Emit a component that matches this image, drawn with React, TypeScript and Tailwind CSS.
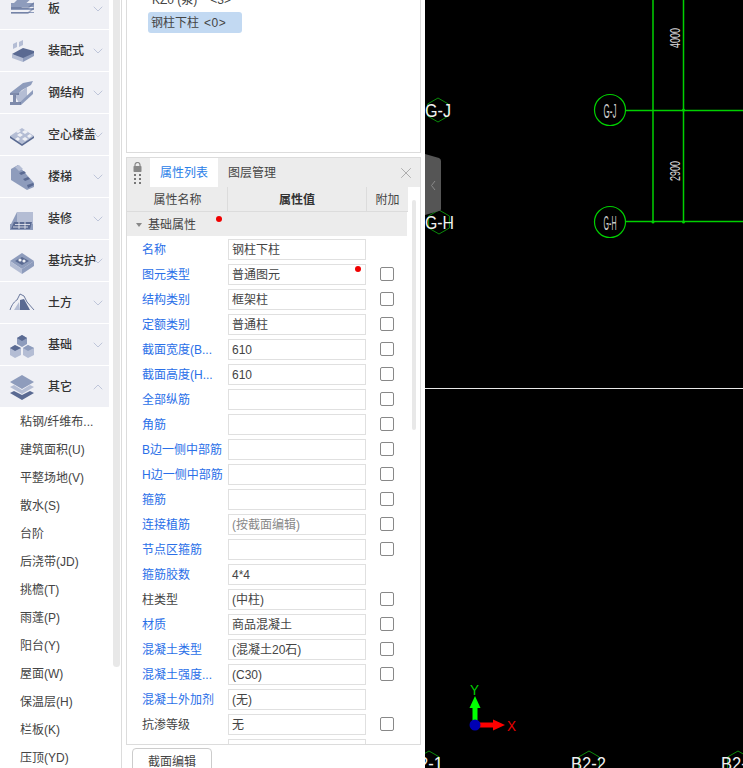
import { ChevronDown, ChevronUp, X } from 'lucide-react';
import type { ReactNode } from 'react';

const dark = '#5a6a92';
const mid = '#8e9cbc';
const light = '#b4bdd4';

const icons: Record<string, ReactNode> = {
  slab: (
    <>
      <path d="M11 12 L24 -1 H34 V2 L20 15 H11Z" fill={mid} />
      <path d="M11 9h23v4H11zM11 14h23v4H11zM11 19h23v-3H11z" fill={mid} />
      <path d="M11 13h17l6-5v2l-6 5H11zM11 18h17l6-5v2l-6 5H11z" fill={dark} opacity="0.5" />
    </>
  ),
  prefab: (
    <>
      <path d="M13 8l4-2v5l-4 2zM19 6l4-2v5l-4 2z" fill={light} />
      <path d="M12 18l11-6 11 3v3l-11 6z" fill={dark} />
      <path d="M12 18v4l11 4v-4z" fill={light} />
      <path d="M23 22v4l11-6v-3z" fill={mid} />
    </>
  ),
  steel: (
    <>
      <path d="M15 18L27 9V18L19 25Z" fill={light} />
      <path d="M10 15L23 5L33 3L31 7L22 12L19 15Z" fill={mid} />
      <path d="M21 27L33 16V12L20 24Z" fill={mid} />
      <path d="M10 15h9v2h-3v7h5v3H10v-3h3v-7h-3z" fill={dark} opacity="0.75" />
    </>
  ),
  hollow: (
    <>
      <path d="M10 16 L22 8 L34 16 L22 24Z" fill={light} />
      <path d="M10 16v2l12 8 12-8v-2l-12 8z" fill={dark} />
      <path d="M17 15l3-2 3 2-3 2zM22 12l3-2 3 2-3 2zM22 19l3-2 3 2-3 2zM27 16l3-2 2 2-3 2zM15 19l3-2 2 2-2 2zM16 12l3-2 2 1-3 2z" fill="#eff0f5" />
    </>
  ),
  stairs: (
    <>
      <path d="M11 7L18 3L34 21V25L27 28L11 18Z" fill={mid} />
      <path d="M15 5l4-2 4 4-4 2z" fill={light} />
      <path d="M19 11l5-2 2 2-5 2zM23 17l5-2 2 2-5 2zM27 23l6-2 1 2-6 3z" fill={dark} />
    </>
  ),
  finish: (
    <>
      <path d="M17 8h16v14H17z" fill={light} />
      <path d="M10 22l7-14v14z" fill={mid} />
      <path d="M10 20h23v6H10z" fill={mid} />
      <path d="M14 18h18l-2 7H11z" fill={dark} />
      <path d="M15 20.500h15M13 23h15M19 18v7M25 18v7" stroke="#eff0f5" strokeWidth="0.8" />
    </>
  ),
  pit: (
    <>
      <path d="M10 15l12-8 12 8-12 8z" fill={mid} />
      <path d="M10 15v5l12 8v-5z" fill={light} />
      <path d="M22 23v5l12-8v-5z" fill={mid} />
      <path d="M15 15l7-4 7 4-7 4z" fill={dark} />
      <circle cx="20" cy="14" r="1.600" fill="#eff0f5" />
      <circle cx="24" cy="15" r="1.600" fill="#eff0f5" />
    </>
  ),
  earth: (
    <>
      <path d="M10 22C12 16 15 13 17 12L20 6L24 8L27 14L34 22" fill="none" stroke={dark} strokeWidth="0.9" />
      <path d="M14 22L19 14L20 22Z" fill={light} />
      <path d="M20 12L24 11L30 22H20Z" fill={dark} />
    </>
  ),
  base: (
    <>
      <path d="M22 5l5 3v6l-5 3-5-3V8z" fill={mid} />
      <path d="M22 5l5 3-5 3-5-3z" fill={dark} />
      <path d="M15 15l6 3v7l-6 3-5-3v-7z" fill={light} />
      <path d="M15 15l6 3-6 3-5-3z" fill={dark} />
      <path d="M28 15l6 3v7l-6 3-5-3v-7z" fill={light} />
      <path d="M28 15l6 3-6 3-5-3z" fill={mid} />
    </>
  ),
  other: (
    <>
      <path d="M22 3l12 7-12 7-12-7z" fill={mid} />
      <path d="M14 13l8 5 8-5 4 2-12 7-12-7z" fill={light} />
      <path d="M14 19l8 4 8-4 4 2-12 7-12-7z" fill={dark} />
    </>
  ),
};

const groups = [
  { name: '板', icon: 'slab' },
  { name: '装配式', icon: 'prefab' },
  { name: '钢结构', icon: 'steel' },
  { name: '空心楼盖', icon: 'hollow' },
  { name: '楼梯', icon: 'stairs' },
  { name: '装修', icon: 'finish' },
  { name: '基坑支护', icon: 'pit' },
  { name: '土方', icon: 'earth' },
  { name: '基础', icon: 'base' },
];

const subItems = [
  '粘钢/纤维布...',
  '建筑面积(U)',
  '平整场地(V)',
  '散水(S)',
  '台阶',
  '后浇带(JD)',
  '挑檐(T)',
  '雨蓬(P)',
  '阳台(Y)',
  '屋面(W)',
  '保温层(H)',
  '栏板(K)',
  '压顶(YD)',
];

type Row = { label: string; value: string; blue?: boolean; check?: boolean; gray?: boolean; dot?: boolean };

const rows: Row[] = [
  { label: '名称', value: '钢柱下柱', blue: true },
  { label: '图元类型', value: '普通图元', blue: true, check: true, dot: true },
  { label: '结构类别', value: '框架柱', blue: true, check: true },
  { label: '定额类别', value: '普通柱', blue: true, check: true },
  { label: '截面宽度(B...', value: '610', blue: true, check: true },
  { label: '截面高度(H...', value: '610', blue: true, check: true },
  { label: '全部纵筋', value: '', blue: true, check: true },
  { label: '角筋', value: '', blue: true, check: true },
  { label: 'B边一侧中部筋', value: '', blue: true, check: true },
  { label: 'H边一侧中部筋', value: '', blue: true, check: true },
  { label: '箍筋', value: '', blue: true, check: true },
  { label: '连接植筋', value: '(按截面编辑)', blue: true, check: true, gray: true },
  { label: '节点区箍筋', value: '', blue: true, check: true },
  { label: '箍筋胶数', value: '4*4', blue: true },
  { label: '柱类型', value: '(中柱)', check: true },
  { label: '材质', value: '商品混凝土', blue: true, check: true },
  { label: '混凝土类型', value: '(混凝土20石)', blue: true, check: true },
  { label: '混凝土强度...', value: '(C30)', blue: true, check: true },
  { label: '混凝土外加剂', value: '(无)', blue: true },
  { label: '抗渗等级', value: '无', check: true },
  { label: '', value: '' },
];

function Sidebar() {
  return (
    <aside className="flex h-full w-[122px] shrink-0 overflow-hidden border-r border-[#dcdcdc]">
      <div className="w-[109px] shrink-0 -mt-[12px]">
        {groups.map((g) => (
          <div key={g.name} className="mb-px flex h-[41px] items-center bg-[#eff0f5]">
            <svg viewBox="0 0 44 30" className="h-[30px] w-[44px] shrink-0 overflow-hidden">
              {icons[g.icon]}
            </svg>
            <span className="ml-[4px] w-[48px] shrink-0 whitespace-nowrap text-xs font-medium text-[#333]">{g.name}</span>
            <ChevronDown className="-ml-[6px] h-4 w-4 shrink-0 text-[#b4bdd4]" strokeWidth={1.25} />
          </div>
        ))}
        <div className="flex h-[41px] items-center bg-[#eff0f5]">
          <svg viewBox="0 0 44 30" className="h-[30px] w-[44px] shrink-0">
            {icons.other}
          </svg>
          <span className="ml-[4px] w-[48px] shrink-0 text-xs font-medium text-[#333]">其它</span>
          <ChevronUp className="-ml-[6px] h-4 w-4 shrink-0 text-[#b4bdd4]" strokeWidth={1.25} />
        </div>
        <ul className="pt-[0.5px]">
          {subItems.map((s) => (
            <li key={s} className="flex h-[28.05px] items-center whitespace-nowrap pl-5 text-xs text-[#444]">
              {s}
            </li>
          ))}
        </ul>
      </div>
      <div className="ml-1 h-[667px] w-[7px] shrink-0 rounded-b-sm bg-[#e8e8e8]" />
    </aside>
  );
}

function PropertyRow({ row }: { row: Row }) {
  return (
    <div className="flex h-[25px] shrink-0 items-center">
      <span className={`w-[101px] shrink-0 truncate whitespace-nowrap pl-[15px] pr-0 text-xs ${row.blue ? 'text-[#2a6fe8]' : 'text-[#444]'}`}>
        {row.label}
      </span>
      <div className={`relative flex h-[21px] w-[138px] shrink-0 items-center border border-[#e0e0e0] px-[3px] text-xs ${row.gray ? 'text-[#888]' : 'text-[#444]'}`}>
        {row.value}
        {row.dot && <span className="absolute right-[4px] top-[1px] h-[6px] w-[6px] rounded-full bg-[#f00000]" />}
      </div>
      {row.check && <span className="mb-px ml-[14px] h-[14px] w-[14px] shrink-0 rounded-[2px] border border-[#888] bg-white" />}
    </div>
  );
}

function Panels() {
  return (
    <section className="flex h-full w-[303px] shrink-0 flex-col bg-white pl-1 pr-1">
      <div className="h-[153px] shrink-0 overflow-hidden border-x border-b border-[#dcdcdc] pl-[21px]">
        <div className="-mt-[11px] flex h-[21px] items-center gap-[13px] pl-[4px] text-xs text-[#444]">
          <span>KZ0 (泵)</span>
          <span>&lt;3&gt;</span>
        </div>
        <div className="mt-[2px] flex h-[21px] w-[94px] items-center gap-[5px] rounded-[3px] bg-[#c2d9f2] pl-[3px] text-xs text-[#444]">
          钢柱下柱<span className="tracking-[0.5px]">&lt;0&gt;</span>
        </div>
      </div>

      <div className="mt-1 flex h-[588px] shrink-0 flex-col overflow-hidden border border-[#dcdcdc]">
        <div className="flex h-[29px] shrink-0 items-center bg-[#ececec]">
          <div className="flex w-[23px] shrink-0 flex-col items-center pr-[3px]">
            <svg viewBox="0 0 9 10" className="h-[10px] w-[9px]">
              <path d="M2 4.500V3a2.500 2.500 0 0 1 5 0v1.500" fill="none" stroke="#888" strokeWidth="1.200" />
              <rect x="0.500" y="4" width="8" height="6" rx="0.800" fill="#888" />
            </svg>
            <div className="mt-[2px] grid grid-cols-2 gap-x-[3px] gap-y-[2px]">
              {[0, 1, 2, 3, 4, 5].map((i) => (
                <span key={i} className="h-[2px] w-[2px] bg-[#777]" />
              ))}
            </div>
          </div>
          <div className="flex h-full w-[68px] items-center justify-center bg-white text-xs text-[#2a80e8]">属性列表</div>
          <div className="ml-[10px] text-xs text-[#444]">图层管理</div>
          <X className="ml-auto mr-[5px] h-[18px] w-[18px] text-[#999]" strokeWidth={1} />
        </div>

        <div className="relative min-h-0 flex-1">
          <div className="flex h-[25px] w-[281px] border-b border-[#dcdcdc] bg-[#ececec] text-xs text-[#444]">
            <div className="flex w-[101px] items-center justify-center border-r border-[#dcdcdc] pl-px pt-px">属性名称</div>
            <div className="flex w-[139px] items-center justify-center border-r border-[#dcdcdc] pt-px font-semibold text-[#333]">属性值</div>
            <div className="flex flex-1 items-center justify-center pt-px">附加</div>
          </div>
          <div className="relative flex h-[24px] w-[280px] items-center bg-[#ececec] pt-[2px] text-xs text-[#444]">
            <span className="ml-[9px] mr-[6px] h-0 w-0 border-x-[3px] border-t-[4px] border-x-transparent border-t-[#888]" />
            基础属性
            <span className="absolute left-[89px] top-[4px] h-[6px] w-[6px] rounded-full bg-[#f00000]" />
          </div>
          <div className="pt-px">
            {rows.map((r, i) => (
              <PropertyRow key={i} row={r} />
            ))}
          </div>
          <div className="absolute right-[4px] top-[13px] h-[230px] w-[4px] rounded-sm bg-[#e8e8e8]" />
        </div>
      </div>

      <div className="ml-[6px] mt-[3px] flex h-[30px] w-[80px] shrink-0 items-center justify-center rounded-t border border-[#ccc] pb-[2px] text-xs text-[#444]">
        截面编辑
      </div>
    </section>
  );
}

function Bubble({ cx, cy, label }: { cx: number; cy: number; label: string }) {
  return (
    <g>
      <circle cx={cx} cy={cy} r="15.500" fill="none" stroke="#00d000" strokeWidth="1.200" />
      <text x={cx - 6.5} y={cy + 7.5} textLength={13} lengthAdjust="spacingAndGlyphs" fontSize="21" fill="#ccc" fontFamily="Liberation Sans">
        {label}
      </text>
    </g>
  );
}

function Hex({ cx, cy, label, tx, len }: { cx: number; cy: number; label: string; tx: number; len: number }) {
  const pts = [0, 60, 120, 180, 240, 300]
    .map((a) => {
      const r = (a * Math.PI) / 180;
      return `${cx + 12 * Math.sin(r)},${cy - 12 * Math.cos(r)}`;
    })
    .join(' ');
  return (
    <g>
      <polygon points={pts} fill="none" stroke="#0a8a0a" strokeWidth="1" />
      <text x={tx} y={cy + 7} textLength={len} lengthAdjust="spacingAndGlyphs" fontSize="19" fill="#f0f0f0" fontFamily="Liberation Sans">
        {label}
      </text>
    </g>
  );
}

function Canvas() {
  return (
    <main className="relative h-full min-w-0 flex-1 overflow-hidden bg-black">
      <svg viewBox="0 0 318 768" className="h-full w-full">
        <path d="M228 0V222M258.500 0V222M201 110.500H318" stroke="#00d000" strokeWidth="1.500" fill="none" />
        <path d="M201 221.500H318" stroke="#00d000" strokeWidth="1.500" />
        <circle cx="258.500" cy="110" r="1.500" fill="#00d000" />
        <circle cx="228" cy="222" r="1.500" fill="#00d000" />
        <circle cx="258.500" cy="222" r="1.500" fill="#00d000" />
        <Bubble cx={185} cy={110} label="G-J" />
        <Bubble cx={185} cy={222} label="G-H" />
        <text transform="translate(255 48) rotate(-90)" textLength={20} lengthAdjust="spacingAndGlyphs" fontSize="14" fill="#ddd" fontFamily="Liberation Sans">4000</text>
        <text transform="translate(255 181) rotate(-90)" textLength={20} lengthAdjust="spacingAndGlyphs" fontSize="14" fill="#ddd" fontFamily="Liberation Sans">2900</text>
        <path d="M0 388.500H318" stroke="#e8e8e8" strokeWidth="1" />
        <Hex cx={13} cy={110} label="G-J" tx={0} len={26} />
        <Hex cx={14} cy={222} label="G-H" tx={0} len={29} />
        <Hex cx={4} cy={763} label="B2-1" tx={-17} len={35} />
        <Hex cx={164} cy={763} label="B2-2" tx={146} len={35} />
        <Hex cx={313} cy={763} label="B2-3" tx={296} len={35} />
        <path d="M50 725V704" stroke="#00ff00" strokeWidth="5" />
        <path d="M50 696l5.500 12h-11z" fill="#00ff00" />
        <path d="M50 725H72" stroke="#ff0000" strokeWidth="5" />
        <path d="M80 725l-12 5.500v-11z" fill="#ff0000" />
        <circle cx="50" cy="725" r="5.500" fill="#0000b4" />
        <text x="45" y="695" textLength={9} lengthAdjust="spacingAndGlyphs" fontSize="15" fill="#00d000" fontFamily="Liberation Sans">Y</text>
        <text x="82" y="731" textLength={9} lengthAdjust="spacingAndGlyphs" fontSize="15" fill="#e80000" fontFamily="Liberation Sans">X</text>
        <path d="M0 154L14 158Q16 159 16 161V209Q16 211 14 211L0 215Z" fill="#555" />
        <path d="M10 181L6.500 185.500L10 190" fill="none" stroke="#8a8a8a" strokeWidth="1" />
      </svg>
    </main>
  );
}

export default function App() {
  return (
    <div
      className="flex h-[768px] w-[743px] overflow-hidden bg-white"
      style={{ fontFamily: '"Liberation Sans", "Noto Sans CJK SC", sans-serif' }}
    >
      <Sidebar />
      <Panels />
      <Canvas />
    </div>
  );
}
